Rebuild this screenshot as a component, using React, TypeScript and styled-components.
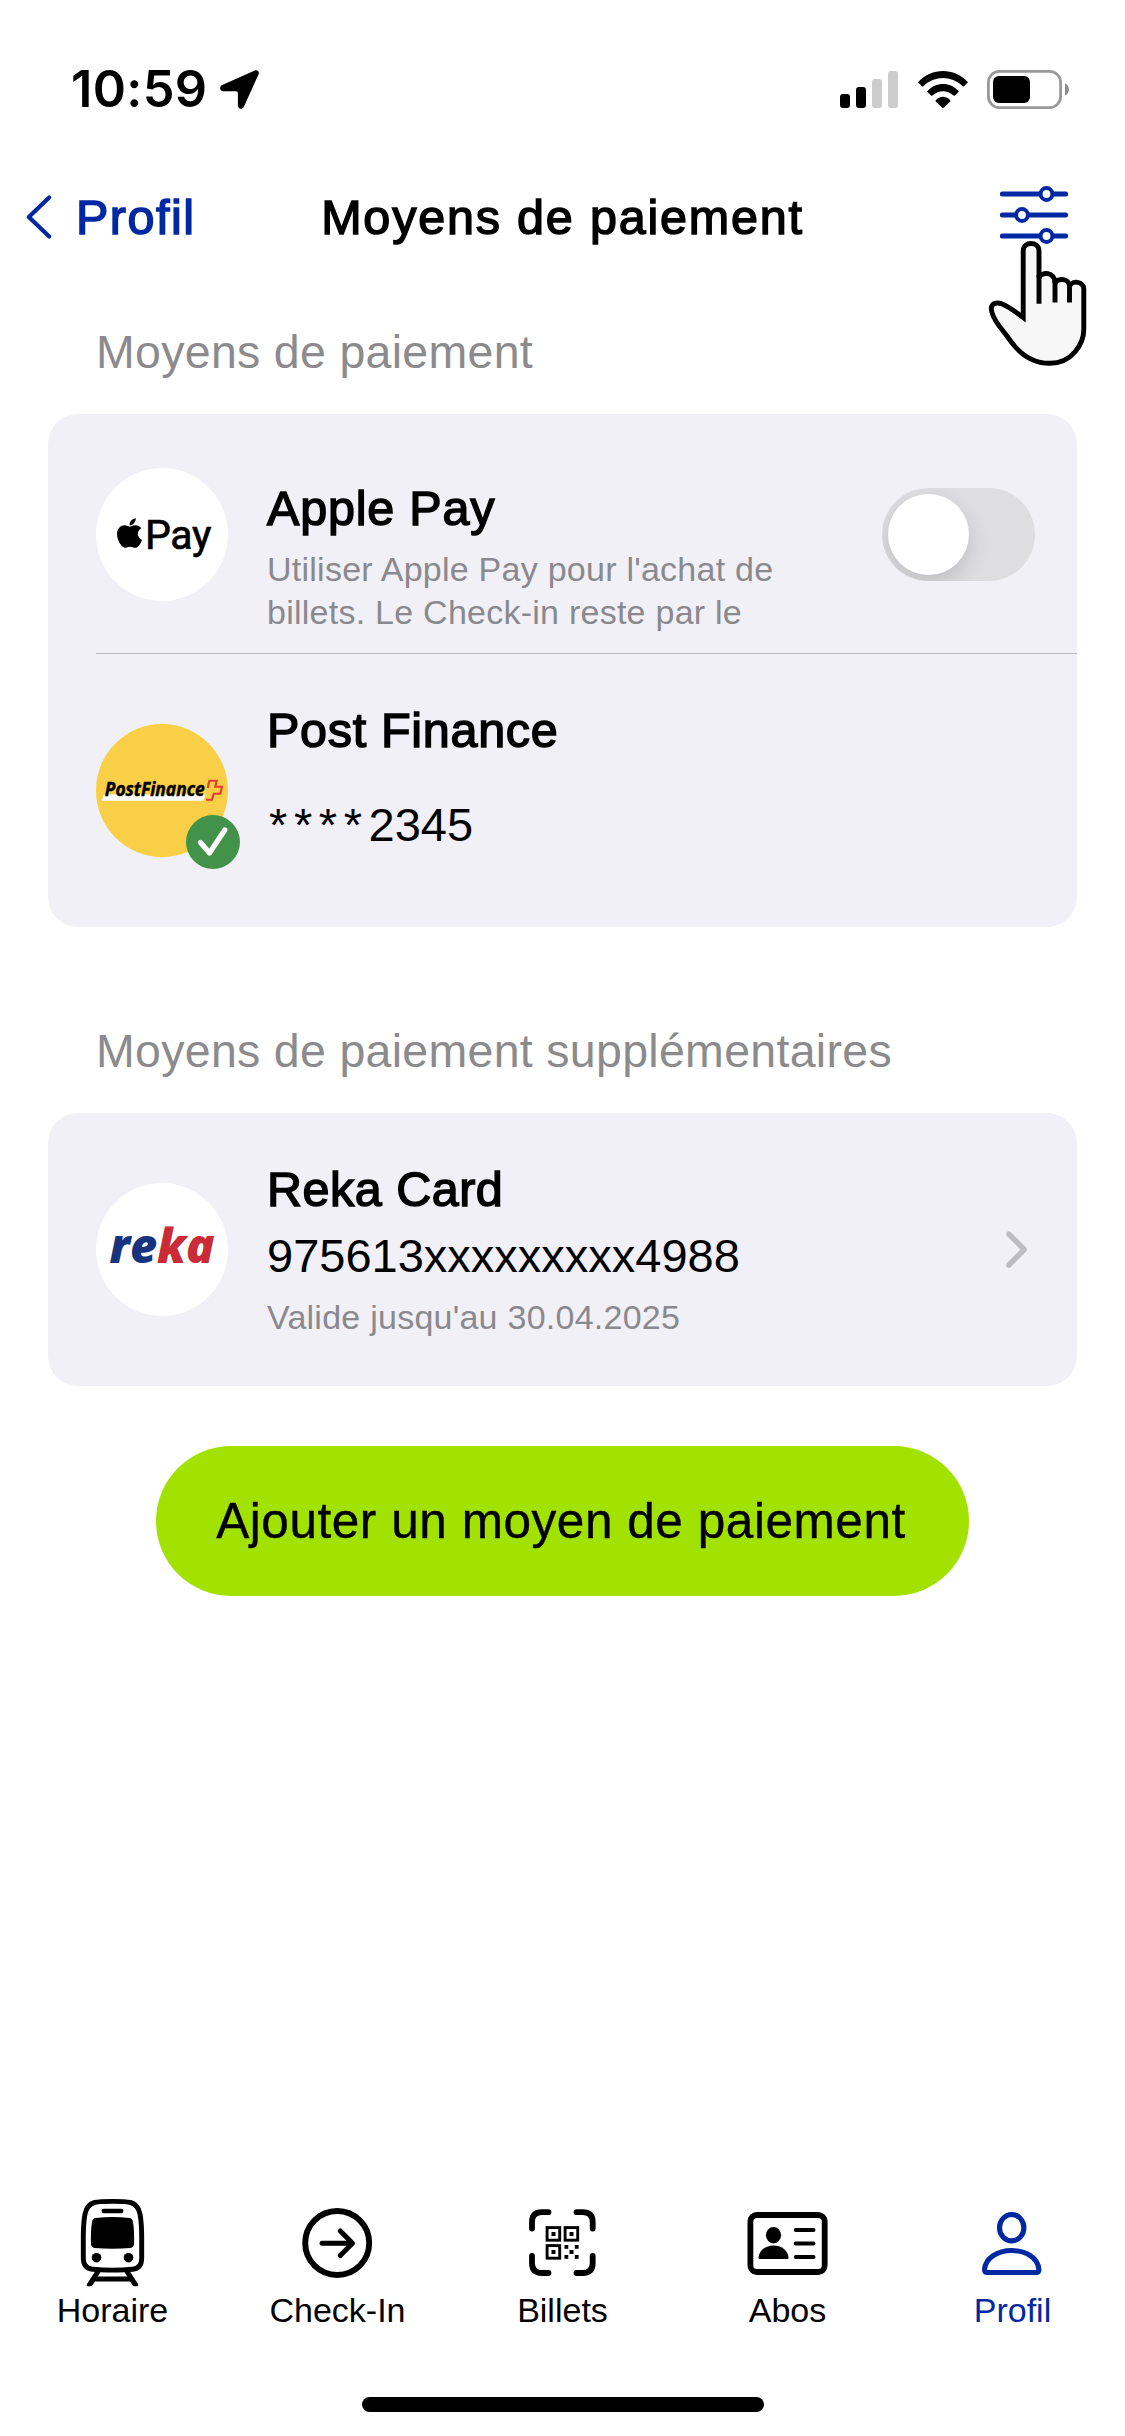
import React from "react";
import styled, { createGlobalStyle } from "styled-components";
import { FaApple } from "react-icons/fa";

const BLUE = "#0028a3";
const GREY = "#8a898e";

const GlobalStyle = createGlobalStyle`
  * { box-sizing: border-box; }
  body { margin: 0; background: #fff; }
`;

const Screen = styled.div`
  display: flex;
  flex-direction: column;
  width: 1125px;
  height: 2436px;
  overflow: hidden;
  background: #fff;
  color: #000;
  font-family: "Liberation Sans", Arial, sans-serif;
`;

const Icon = styled.svg`
  display: block;
  flex: none;
  overflow: visible;
`;

/* ---------- status bar ---------- */

const StatusBar = styled.div`
  display: flex;
  align-items: center;
  justify-content: space-between;
  height: 178px;
  padding: 0 56px 0 71px;
`;

const StatusGroup = styled.div<{ $gap: number }>`
  display: flex;
  align-items: center;
  gap: ${(p) => p.$gap}px;
`;

const Clock = styled.span`
  width: 134px;
  font: 600 50.5px/60px Inter, sans-serif;
  letter-spacing: 0.3px;
  white-space: nowrap;
`;

/* ---------- navigation bar ---------- */

const NavBar = styled.header`
  position: relative;
  display: grid;
  grid-template-columns: 1fr auto 1fr;
  align-items: center;
  height: 78px;
`;

const BackLink = styled.a`
  display: flex;
  align-items: center;
  gap: 24px;
  padding-left: 26px;
  color: ${BLUE};
`;

const Medium = styled.span<{ $spacing?: number }>`
  display: block;
  font-size: 48.5px;
  line-height: 58px;
  letter-spacing: ${(p) => p.$spacing ?? 1.8}px;
  -webkit-text-stroke: 1.5px currentColor;
  white-space: nowrap;
`;

const NavAction = styled.div`
  justify-self: end;
  padding: 0 57px 4px 0;
`;

const Pointer = styled.div`
  position: absolute;
  left: 985px;
  top: 58px;
`;

/* ---------- sections ---------- */

const SectionTitle = styled.h2<{ $top: number; $bottom: number }>`
  margin: 0;
  padding: ${(p) => p.$top}px 0 ${(p) => p.$bottom}px 96px;
  color: #8b8b8d;
  font-size: 46.5px;
  font-weight: 400;
  line-height: 60px;
  letter-spacing: 0.3px;
`;

const Card = styled.section`
  margin: 0 48px;
  border-radius: 30px;
  background: #f1f0f6;
`;

const Row = styled.div<{ $height: number }>`
  display: flex;
  align-items: flex-start;
  height: ${(p) => p.$height}px;
  padding-left: 48px;
`;

const Divider = styled.div`
  height: 1px;
  margin-left: 48px;
  background: #bbbbc0;
`;

const Logo = styled.div<{ $bg: string; $top: number }>`
  position: relative;
  display: flex;
  flex: none;
  align-items: center;
  justify-content: center;
  width: 132px;
  height: 133px;
  margin-top: ${(p) => p.$top}px;
  border-radius: 50%;
  background: ${(p) => p.$bg};
`;

const ApplePayMark = styled.div`
  display: flex;
  align-items: center;
  gap: 2px;
  padding-left: 3px;
  font: 400 41px/48px Roboto, sans-serif;
  letter-spacing: -0.4px;
  -webkit-text-stroke: 0.7px #000;

  svg {
    width: 27px;
    height: 34px;
    margin-top: -4px;
  }
`;

const RekaMark = styled.div`
  padding-bottom: 10px;
  color: #17337f;
  font: italic 800 47px/60px "Open Sans", sans-serif;
  letter-spacing: -0.1px;

  em { color: #c92b37; }
`;

const Badge = styled.div`
  position: absolute;
  left: 90px;
  top: 91px;
  display: flex;
  align-items: center;
  justify-content: center;
  width: 54px;
  height: 54px;
  border-radius: 50%;
  background: #429349;
`;

const Details = styled.div<{ $top: number }>`
  flex: 1;
  padding: ${(p) => p.$top}px 0 0 39px;
`;

const CardNumber = styled.div<{ $top: number }>`
  margin-top: ${(p) => p.$top}px;
  font-size: 47px;
  line-height: 58px;
`;

const Mask = styled.span`
  padding-left: 2px;
  letter-spacing: 6.6px;
`;

const Note = styled.p`
  margin: 11px 0 0;
  color: ${GREY};
  font-size: 34px;
  line-height: 43px;
  letter-spacing: 0.25px;
  white-space: nowrap;
`;

const Toggle = styled.button`
  display: flex;
  align-items: center;
  width: 153px;
  height: 93px;
  margin: 74px 42px 0 0;
  padding: 0 6px;
  border: 0;
  border-radius: 47px;
  overflow: hidden;
  background: #dedde2;
`;

const Knob = styled.span`
  width: 81px;
  height: 81px;
  border-radius: 50%;
  background: #fff;
  box-shadow: 0 9px 22px rgba(0, 0, 0, 0.14);
`;

const Disclosure = styled.div`
  align-self: center;
  padding-right: 50px;
`;

const AddButton = styled.button`
  align-self: center;
  width: 813px;
  height: 150px;
  margin-top: 60px;
  padding: 0 3px 0 0;
  border: 0;
  border-radius: 75px;
  background: #a2e200;
  color: #000;
  font: 400 49.5px/60px "Liberation Sans", Arial, sans-serif;
  letter-spacing: 0.55px;
  -webkit-text-stroke: 0.4px #000;
  white-space: nowrap;
`;

/* ---------- tab bar ---------- */

const TabBar = styled.nav`
  display: grid;
  grid-template-columns: repeat(5, 1fr);
  margin-top: auto;
`;

const Tab = styled.a<{ $active?: boolean }>`
  display: flex;
  flex-direction: column;
  align-items: center;
  color: ${(p) => (p.$active ? BLUE : "#000")};
  font-size: 34px;
  line-height: 44px;
`;

const HomeIndicator = styled.div`
  align-self: center;
  width: 402px;
  height: 15px;
  margin: 65px 0 24px;
  border-radius: 8px;
  background: #000;
`;

/* ---------- icons ---------- */

const LocationIcon = () => (
  <Icon width="39" height="39" viewBox="0 0 39 39">
    <path d="M34.800.500 2.200 15.100C-1 16.700-.3 21.300 3.400 21.300H16Q17.900 21.300 17.900 23.200V35.500C17.900 39.200 22.500 39.900 24 36.400L38.600 4.200C39.600 1.700 37.300-.6 34.800.500Z" />
  </Icon>
);

const SignalIcon = () => (
  <Icon width="58" height="37" viewBox="0 0 58 37">
    <rect y="23" width="10" height="14" rx="3" />
    <rect x="16" y="16" width="10" height="21" rx="3" />
    <rect x="32" y="8" width="10" height="29" rx="3" fill="#ccc" />
    <rect x="48" width="10" height="37" rx="3" fill="#ccc" />
  </Icon>
);

const WifiIcon = () => (
  <Icon width="50" height="37" viewBox="0 0 50 37">
    <path d="M0 11.200C14-3.700 36-3.700 50 11.200L46 15.200Q45.400 15.800 44.700 15.200C33 4.300 17 4.300 5.300 15.200Q4.600 15.800 4 15.200Z" />
    <path d="M9 20.400C18 10.600 32 10.600 41 20.400L37 24.500Q36.300 25 35.600 24.500C29 18.800 21 18.800 14.400 24.500Q13.700 25 13 24.500Z" />
    <path d="M17.600 29.400C21.500 24.600 28.500 24.600 32.400 29.400Q32.700 30 32.200 30.600L26 36.600Q25 37.400 24 36.600L17.800 30.600Q17.300 30 17.600 29.400Z" />
  </Icon>
);

const BatteryIcon = () => (
  <Icon width="82" height="39" viewBox="0 0 82 39">
    <rect x="1.400" y="1.400" width="72.200" height="36.200" rx="11" fill="none" stroke="#999" strokeWidth="2.800" />
    <rect x="6" y="6" width="37" height="27" rx="6" />
    <path d="M78 13.300C83.300 16 83.300 23 78 25.700Z" fill="#8c8c8c" />
  </Icon>
);

const BackIcon = () => (
  <Icon width="26" height="44" viewBox="0 0 26 44" fill="none" stroke={BLUE} strokeWidth="4.200" strokeLinecap="round" strokeLinejoin="round">
    <path d="M23.200 2.500 2.800 22 23.200 41.500" />
  </Icon>
);

const SlidersIcon = () => (
  <Icon width="68" height="58" viewBox="0 0 68 58" fill="none" stroke={BLUE} strokeLinecap="round">
    <path strokeWidth="5" d="M2.400 8H40M53 8H65.600M2.400 29H15.500M28.500 29H65.600M2.400 50H40M53 50H65.600" />
    <g fill="#fff" strokeWidth="4">
      <circle cx="46.500" cy="8" r="5.900" />
      <circle cx="22" cy="29" r="5.900" />
      <circle cx="46.500" cy="50" r="5.900" />
    </g>
  </Icon>
);

const HandIcon = () => (
  <Icon width="104" height="130" viewBox="985 236 104 130" fill="#f7f7f7" stroke="#000" strokeWidth="4.900">
    <path d="M1023.200 317.500V251C1023.200 241 1039 241 1039 251V277.500C1041.500 271.500 1055 271.500 1055 283C1058 277.500 1069.500 278.500 1069.500 286.500C1072 279.500 1083.800 281.500 1083.800 289V329C1083.800 344 1072 363.300 1050 363.300C1036 363.300 1024 357 1014.500 346C1009 339 1005 333 999.500 326.500C994.500 319.500 991.300 313.500 991.300 308.500C991.600 302.700 997 302.300 1001.500 303.700C1008 306 1016 312 1023.200 317.500Z" />
    <path fill="none" d="M1039 275V303.700M1055 281V302.500M1069.500 285V302.500" />
  </Icon>
);

const CheckIcon = () => (
  <Icon width="54" height="54" viewBox="0 0 54 54" fill="none" stroke="#fff" strokeWidth="5.200" strokeLinecap="round" strokeLinejoin="round">
    <path d="M14.500 27.500 23.500 38 38.800 15" />
  </Icon>
);

const PostFinanceMark = () => (
  <Icon width="132" height="133" viewBox="0 0 132 133">
    <path d="M6 76.700 7.600 70.500H109.300L107.300 76.700Z" fill="#fff" />
    <text
      x="8.800"
      y="72.400"
      fontFamily="Open Sans, sans-serif"
      fontSize="19"
      fontWeight="700"
      fontStyle="italic"
      stroke="#000"
      strokeWidth="0.400"
      textLength="100"
      lengthAdjust="spacingAndGlyphs"
    >
      PostFinance
    </text>
    <path
      d="M111.700 64 113.300 56.700H120.700L119.300 62.700H126L124.300 69.700H117.700L116 75.700H110"
      fill="none"
      stroke="#de3f30"
      strokeWidth="2.100"
    />
  </Icon>
);

const ChevronIcon = () => (
  <Icon width="21" height="37" viewBox="0 0 21 37" fill="none" stroke="#bdbcc2" strokeWidth="5.400" strokeLinecap="round" strokeLinejoin="round">
    <path d="M2.900 3 18.200 18.500 2.900 34" />
  </Icon>
);

const TabIcon = ({ children }: { children: React.ReactNode }) => (
  <Icon width="96" height="94" viewBox="0.500 0 96 94" fill="none" stroke="currentColor" strokeLinecap="round" strokeLinejoin="round">
    {children}
  </Icon>
);

const TrainIcon = () => (
  <TabIcon>
    <path
      strokeWidth="4.900"
      d="M48 7.400C40 7.400 34 7.600 30 8.500C24 10 21.500 15 20.500 20C18.800 29 18.800 38 18.800 44V64C18.800 71 22 74.600 28 75.300C38 76.300 58 76.300 68 75.300C74 74.600 77.200 71 77.200 64V44C77.200 38 77.200 29 75.500 20C74.500 15 72 10 66 8.500C62 7.600 56 7.400 48 7.400Z"
    />
    <path strokeWidth="4.400" d="M39.300 17H56.700" />
    <path fill="currentColor" stroke="none" d="M31 24Q48 22.200 65 24Q68 24.300 68.500 28Q70 37 69.500 50Q69.300 53.500 66 54Q48 55.600 30 54Q26.700 53.500 26.500 50Q26 37 27.500 28Q28 24.300 31 24Z" />
    <circle cx="32" cy="63.700" r="4.800" fill="currentColor" stroke="none" />
    <circle cx="64" cy="63.700" r="4.800" fill="currentColor" stroke="none" />
    <path fill="currentColor" stroke="none" d="M31.500 76H37.200L28.200 91Q27.300 92.300 25.800 92.300H23Q21.800 91.500 22.500 90ZM64.500 76H58.800L67.800 91Q68.700 92.300 70.200 92.300H73Q74.200 91.500 73.500 90Z" />
    <path strokeWidth="5" strokeLinecap="butt" d="M29 84.900H67" />
  </TabIcon>
);

const CheckInIcon = () => (
  <TabIcon>
    <circle cx="47.700" cy="49" r="32" strokeWidth="5.900" />
    <path strokeWidth="5" d="M32.500 49.200H62.500M50.800 37 63 49.200 50.800 61.500" />
  </TabIcon>
);

const TicketIcon = () => (
  <TabIcon>
    <path strokeWidth="5.800" d="M17.500 34.500V28Q17.500 18.200 27.500 18.200H34M62 18.200H68Q78.200 18.200 78.200 28V34.500M78.200 62V69Q78.200 79 68 79H62M34 79H27.500Q17.500 79 17.500 69V62" />
    <g strokeWidth="2.900" strokeLinejoin="miter">
      <rect x="32.600" y="33.600" width="12.600" height="12.600" />
      <rect x="50.600" y="33.600" width="12.600" height="12.600" />
      <rect x="32.600" y="51.600" width="12.600" height="12.600" />
    </g>
    <g fill="currentColor" stroke="none">
      <rect x="37" y="38" width="4" height="4" />
      <rect x="55" y="38" width="4" height="4" />
      <rect x="37" y="56" width="4" height="4" />
      <rect x="50" y="51" width="3.800" height="3.800" />
      <rect x="60.300" y="51" width="3.800" height="3.800" />
      <rect x="55" y="56" width="4" height="4" />
      <rect x="50" y="61" width="3.800" height="3.800" />
      <rect x="60.300" y="61" width="3.800" height="3.800" />
    </g>
  </TabIcon>
);

const PassIcon = () => (
  <TabIcon>
    <rect x="10.900" y="21" width="74.300" height="57" rx="6.500" strokeWidth="5.800" />
    <ellipse cx="34" cy="41.300" rx="7.600" ry="8.200" fill="currentColor" stroke="none" />
    <path fill="currentColor" stroke="none" d="M20 65Q19 65 19 63.500C19.500 56 26.500 51.500 34 51.500C41.500 51.500 48.500 56 49 63.500Q49 65 48 65Z" />
    <path strokeWidth="4" d="M56.300 36H74M56.300 49.500H74M56.300 63H74" />
  </TabIcon>
);

const ProfileIcon = () => (
  <TabIcon>
    <ellipse cx="47.200" cy="33.700" rx="12.200" ry="13.200" strokeWidth="5.100" />
    <path strokeWidth="5.100" d="M23 78.500Q20 78.500 20 75.500C21 64 33 56.500 47.200 56.500C61.500 56.500 73.500 64 74.400 75.500Q74.400 78.500 71.400 78.500Z" />
  </TabIcon>
);

const tabs = [
  { label: "Horaire", icon: <TrainIcon /> },
  { label: "Check-In", icon: <CheckInIcon /> },
  { label: "Billets", icon: <TicketIcon /> },
  { label: "Abos", icon: <PassIcon /> },
  { label: "Profil", icon: <ProfileIcon />, active: true },
];

export default function App() {
  return (
    <>
      <GlobalStyle />
      <Screen>
        <StatusBar>
          <StatusGroup $gap={15}>
            <Clock>10:59</Clock>
            <LocationIcon />
          </StatusGroup>
          <StatusGroup $gap={19.5}>
            <SignalIcon />
            <WifiIcon />
            <BatteryIcon />
          </StatusGroup>
        </StatusBar>

        <NavBar>
          <BackLink>
            <BackIcon />
            <Medium $spacing={1.5}>Profil</Medium>
          </BackLink>
          <Medium>Moyens de paiement</Medium>
          <NavAction>
            <SlidersIcon />
          </NavAction>
          <Pointer>
            <HandIcon />
          </Pointer>
        </NavBar>

        <SectionTitle $top={66} $bottom={32}>Moyens de paiement</SectionTitle>
        <Card>
          <Row $height={239}>
            <Logo $bg="#fff" $top={54}>
              <ApplePayMark>
                <FaApple />
                Pay
              </ApplePayMark>
            </Logo>
            <Details $top={65}>
              <Medium $spacing={0.8}>Apple Pay</Medium>
              <Note>
                Utiliser Apple Pay pour l'achat de
                <br />
                billets. Le Check-in reste par le
              </Note>
            </Details>
            <Toggle role="switch" aria-checked={false}>
              <Knob />
            </Toggle>
          </Row>
          <Divider />
          <Row $height={273}>
            <Logo $bg="#f8cf47" $top={70}>
              <PostFinanceMark />
              <Badge>
                <CheckIcon />
              </Badge>
            </Logo>
            <Details $top={47}>
              <Medium $spacing={0.7}>Post Finance</Medium>
              <CardNumber $top={37}>
                <Mask>****</Mask>2345
              </CardNumber>
            </Details>
          </Row>
        </Card>

        <SectionTitle $top={94} $bottom={32}>Moyens de paiement supplémentaires</SectionTitle>
        <Card>
          <Row $height={273}>
            <Logo $bg="#fff" $top={70}>
              <RekaMark>
                re<em>ka</em>
              </RekaMark>
            </Logo>
            <Details $top={47}>
              <Medium $spacing={0.5}>Reka Card</Medium>
              <CardNumber $top={9}>975613xxxxxxxxx4988</CardNumber>
              <Note>Valide jusqu'au 30.04.2025</Note>
            </Details>
            <Disclosure>
              <ChevronIcon />
            </Disclosure>
          </Row>
        </Card>

        <AddButton>Ajouter un moyen de paiement</AddButton>

        <TabBar>
          {tabs.map((tab) => (
            <Tab key={tab.label} $active={tab.active}>
              {tab.icon}
              {tab.label}
            </Tab>
          ))}
        </TabBar>
        <HomeIndicator />
      </Screen>
    </>
  );
}
